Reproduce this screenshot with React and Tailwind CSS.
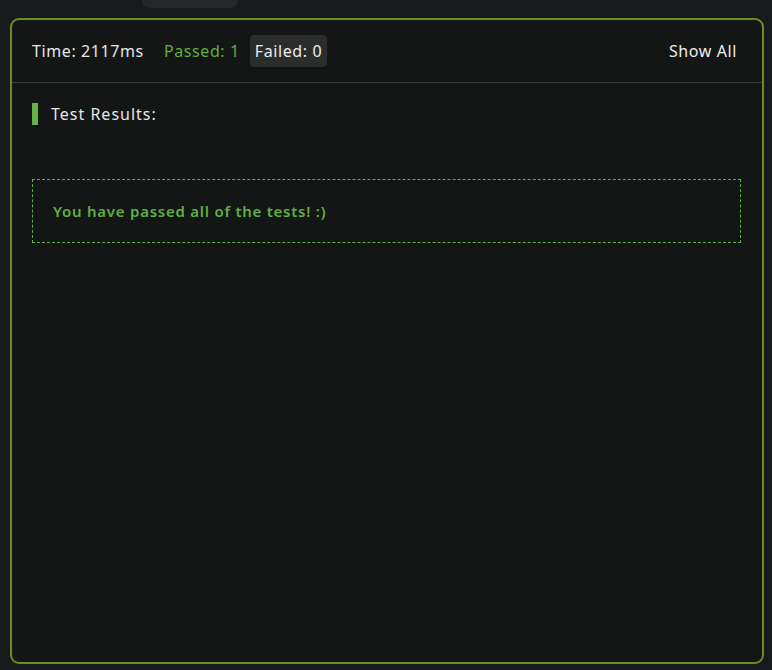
const App = () => {
  return (
    <div
      className="w-[772px] h-[670px] bg-[#18191c] relative overflow-hidden"
      style={{ fontFamily: '"Noto Sans", "Open Sans", sans-serif' }}
    >
      <div className="absolute left-[142px] top-0 w-[96px] h-[8px] rounded-b-[8px] bg-[#26272b]" />
      <div className="pt-[18px] pl-[10px] pr-[8px] pb-[6px] h-full">
        <div className="h-full border-2 border-[#6a8d22] rounded-[9px] bg-[#141515] flex flex-col">
          <div className="h-[63px] border-b border-[#3c3d3d] flex items-center pl-[20px] pr-[25px] text-[16px] tracking-[0.6px]">
            <span className="text-[#e6e6e6]">Time: 2117ms</span>
            <span className="ml-[20px] text-[#5fae43]">Passed: 1</span>
            <span className="ml-[10px] px-[5px] h-[32px] flex items-center rounded-[4px] bg-[#2b2c2c] text-[#eeeeee]">
              Failed: 0
            </span>
            <span className="ml-auto text-[#eeeeee]">Show All</span>
          </div>
          <div className="px-[20px] pt-[20px]">
            <div className="flex items-center h-[22px]">
              <div className="w-[6px] h-[22px] bg-[#66b247]" />
              <span className="ml-[13px] text-[16px] tracking-[1px] text-[#e6e6e6]">Test Results:</span>
            </div>
            <div className="mt-[54px] mr-[1px] h-[64px] border border-dashed border-[#5fae43] flex items-center pl-[20px]">
              <span className="text-[15px] font-semibold text-[#5fae43] tracking-[0.75px]">
                You have passed all of the tests! :)
              </span>
            </div>
          </div>
        </div>
      </div>
    </div>
  );
};

export default App;
